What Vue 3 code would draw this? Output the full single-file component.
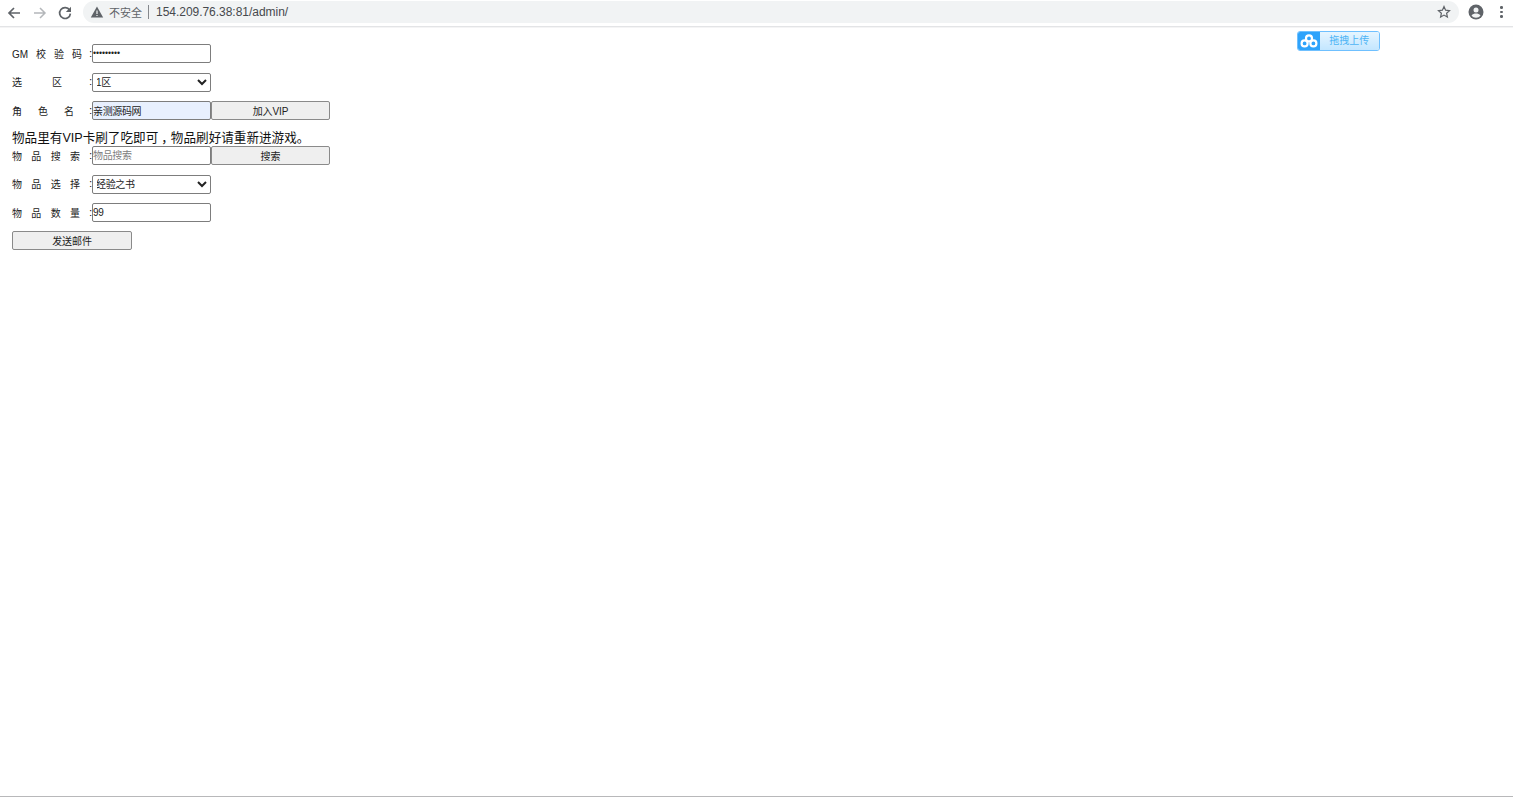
<template>
  <div class="page">
    <header class="toolbar">
      <div class="nav">
        <svg class="nav-icon" viewBox="0 0 16 16"><path d="M14 8H3M8 3 3 8l5 5" fill="none" stroke="#5f6368" stroke-width="1.7"/></svg>
        <svg class="nav-icon" viewBox="0 0 16 16"><path d="M2 8h11M8 3l5 5-5 5" fill="none" stroke="#b4b7ba" stroke-width="1.5"/></svg>
        <svg class="nav-icon" viewBox="0 0 16 16"><path d="M12.6 5.2A5.4 5.4 0 1 0 13.4 8.6" fill="none" stroke="#5f6368" stroke-width="1.7"/><path d="M14 1.8V7H8.8z" fill="#5f6368"/></svg>
      </div>
      <div class="omnibox">
        <svg class="warn" viewBox="0 0 14 14"><path d="M7 1.5 13.2 12.5H.8z" fill="#5f6368"/><path d="M6.4 5.5h1.2v3.6H6.4zM6.4 9.9h1.2v1.2H6.4z" fill="#f1f3f4"/></svg>
        <span class="insecure">不安全</span>
        <span class="sep"></span>
        <span class="url">154.209.76.38:81/admin/</span>
        <svg class="star" viewBox="0 0 14 14"><path d="M7 1.6 8.6 5.2l3.9.4-2.9 2.6.8 3.9L7 10.1l-3.4 2 .8-3.9L1.500 5.600l3.900-.4z" fill="none" stroke="#5f6368" stroke-width="1.200"/></svg>
      </div>
      <svg class="avatar" viewBox="0 0 16 16"><circle cx="8" cy="8" r="7.500" fill="#5f6368"/><circle cx="8" cy="6" r="2.500" fill="#f1f3f4"/><path d="M3.500 11.700C4.600 10 6.300 9.600 8 9.600s3.400.4 4.500 2.100A5.800 5.800 0 0 1 8 13.800a5.800 5.800 0 0 1-4.500-2.100z" fill="#f1f3f4"/></svg>
      <div class="kebab"><i></i><i></i><i></i></div>
    </header>

    <main class="content">
      <form class="form" @submit.prevent>
        <div class="row">
          <label class="label"><span>GM</span><span>校</span><span>验</span><span>码</span></label>
          <span class="colon">:</span>
          <input class="field password" type="password" value="123456789" />
        </div>
        <div class="row">
          <label class="label short"><span>选</span><span>区</span></label>
          <span class="colon">:</span>
          <select class="field select"><option>1区</option></select>
        </div>
        <div class="row">
          <label class="label three"><span>角</span><span>色</span><span>名</span></label>
          <span class="colon">:</span>
          <input class="field autofilled" type="text" value="亲测源码网" />
          <button class="btn" type="button">加入VIP</button>
        </div>
        <p class="note">物品里有VIP卡刷了吃即可<span class="comma">，</span>物品刷好请重新进游戏。</p>
        <div class="row">
          <label class="label four"><span>物</span><span>品</span><span>搜</span><span>索</span></label>
          <span class="colon">:</span>
          <input class="field" type="text" placeholder="物品搜索" />
          <button class="btn" type="button">搜索</button>
        </div>
        <div class="row">
          <label class="label four"><span>物</span><span>品</span><span>选</span><span>择</span></label>
          <span class="colon">:</span>
          <select class="field select"><option>经验之书</option></select>
        </div>
        <div class="row">
          <label class="label four"><span>物</span><span>品</span><span>数</span><span>量</span></label>
          <span class="colon">:</span>
          <input class="field" type="text" value="99" />
        </div>
        <div class="row last">
          <button class="btn send" type="button">发送邮件</button>
        </div>
      </form>

      <div class="upload">
        <div class="upload-icon">
          <svg viewBox="0 0 18 14" width="18" height="14"><g fill="none" stroke="#fff" stroke-width="2.200"><circle cx="9" cy="4.400" r="3"/><circle cx="4.600" cy="9.400" r="3"/><circle cx="13.400" cy="9.400" r="3"/></g></svg>
        </div>
        <div class="upload-text">拖拽上传</div>
      </div>
    </main>
    <div class="bottom-line"></div>
  </div>
</template>

<script setup>
</script>

<style>
html, body { margin: 0; background: #fff; overflow: hidden; }
</style>

<style scoped>
.page {
  position: relative;
  height: 797px;
  font-family: "Liberation Sans", "Noto Sans CJK SC", sans-serif;
  color: #000;
  background: #fff;
}
.toolbar {
  height: 26px;
  display: flex;
  align-items: center;
  border-bottom: 1px solid #e3e4e6;
  box-shadow: 0 1px 0 #f4f4f5;
}
.nav {
  width: 83px;
  display: flex;
  align-items: center;
  padding-left: 6px;
  gap: 9.500px;
  box-sizing: border-box;
  flex: none;
}
.nav-icon { width: 16px; height: 16px; flex: none; margin-top: -1px; }
.omnibox {
  width: 1376px;
  height: 22px;
  margin-top: -2px;
  border-radius: 11px;
  background: #f1f3f4;
  display: flex;
  align-items: center;
  padding: 0 9px 0 7px;
  box-sizing: border-box;
  flex: none;
}
.warn { width: 14px; height: 14px; flex: none; margin-right: 5px; }
.insecure { font-size: 11px; color: #5f6368; }
.sep { width: 1px; height: 14px; background: #85888c; margin: 0 7px 0 6px; }
.url { font-size: 12px; color: #46494d; flex: 1; letter-spacing: -.03px; }
.star { width: 14px; height: 14px; flex: none; margin-right: -1px; }
.avatar { width: 16px; height: 16px; margin: -2px 0 0 9px; flex: none; }
.kebab {
  margin: -2px 0 0 16px;
  display: flex;
  flex-direction: column;
  gap: 2px;
}
.kebab i { width: 2.500px; height: 2.500px; background: #5f6368; border-radius: 50%; display: block; }

.content { padding: 17px 12px 0; }
.form { width: 320px; display: flex; flex-direction: column; font-size: 10px; }
.row { display: flex; align-items: center; height: 19px; margin-bottom: 9.500px; }
.row.last { margin-top: -.3px; }
.label {
  width: 70px;
  display: flex;
  justify-content: space-between;
  align-items: baseline;
  flex: none;
  font-size: 10px;
  padding-bottom: 1px;
  color: #222;
}
.label.short { width: 50px; margin-right: 20px; }
.label.three { width: 62px; margin-right: 8px; }
.label.four { width: 68px; margin-right: 2px; }
.colon { width: 10px; text-align: right; flex: none; font-size: 10px; padding-bottom: 1px; }
.field {
  width: 119px;
  height: 19px;
  box-sizing: border-box;
  border: 1px solid #7d7d7d;
  border-radius: 2px;
  padding: 0 0 1px;
  margin: 0;
  background: #fff;
  font-family: inherit;
  font-size: 10px;
  letter-spacing: -.35px;
  color: #222;
  outline: none;
  flex: none;
}
.field::placeholder { color: #808080; }
.password { font-size: 8.600px; letter-spacing: 0; }
.select { text-indent: -1px; padding-bottom: 0; }
.autofilled { background: #e8f0fe; }
.btn {
  width: 119px;
  height: 19px;
  box-sizing: border-box;
  border: 1px solid #8a8a8a;
  border-radius: 2px;
  background: #efefef;
  font-family: inherit;
  font-size: 10px;
  letter-spacing: -.1px;
  color: #222;
  padding: 0 0 1px;
  flex: none;
}
.btn.send { width: 120px; }
.note {
  margin: 0;
  height: 16.500px;
  font-size: 12.600px;
  line-height: 16px;
  white-space: nowrap;
  color: #111;
}
.comma { display: inline-block; transform: translateX(3px); }
.upload {
  position: absolute;
  left: 1297px;
  top: 31px;
  width: 82.500px;
  height: 20px;
  display: flex;
  border-radius: 3px;
  overflow: hidden;
  box-sizing: border-box;
  border: 1px solid #6fc0ff;
}
.upload-icon {
  width: 22px;
  background: #2ea3fb;
  display: flex;
  align-items: center;
  justify-content: center;
  flex: none;
}
.upload-text {
  flex: 1;
  background: linear-gradient(#e6f5ff, #c3e6ff);
  color: #4db4f5;
  font-size: 10px;
  line-height: 17px;
  text-align: center;
}
.bottom-line {
  position: absolute;
  left: 0;
  right: 0;
  bottom: 0;
  height: 1px;
  background: #b8b8ba;
}
</style>
